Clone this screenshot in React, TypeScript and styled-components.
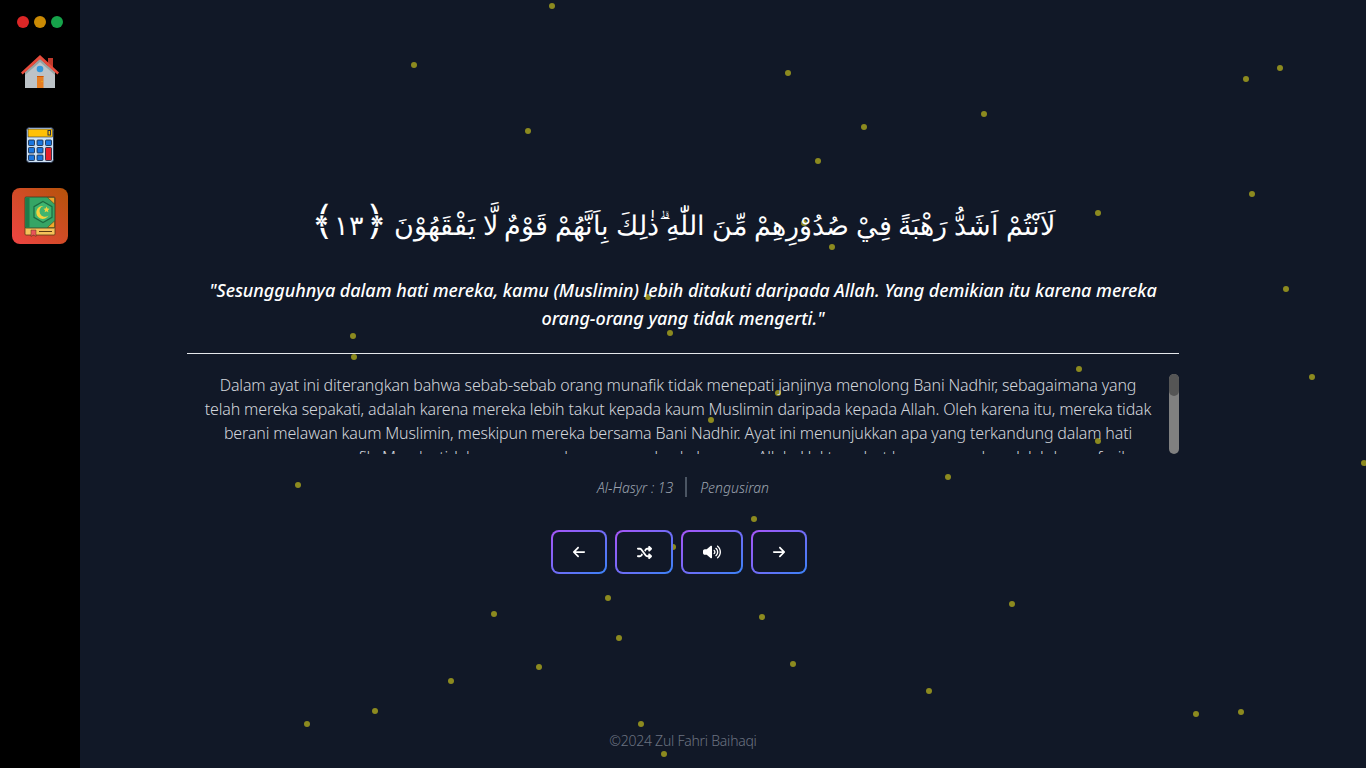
import { createGlobalStyle, styled } from 'styled-components';
import { FaArrowLeft, FaArrowRight, FaShuffle, FaVolumeHigh } from 'react-icons/fa6';

const GlobalStyle = createGlobalStyle`
  html, body {
    margin: 0;
    padding: 0;
    background: #111827;
  }
  * {
    box-sizing: border-box;
  }
`;

const Page = styled.div`
  position: relative;
  height: 100vh;
  display: flex;
  flex-direction: column;
  align-items: center;
  overflow: hidden;
  background: #111827;
  color: #fff;
  font-family: 'Noto Sans', sans-serif;
`;

const Sidebar = styled.aside`
  position: fixed;
  top: 0;
  left: 0;
  bottom: 0;
  z-index: 3;
  width: 80px;
  display: flex;
  flex-direction: column;
  align-items: center;
  gap: 16px;
  padding-top: 16px;
  background: #000;
`;

const Lights = styled.div`
  display: flex;
  gap: 5px;
`;

const Light = styled.span<{ $color: string }>`
  width: 12px;
  height: 12px;
  border-radius: 50%;
  background: ${({ $color }) => $color};
`;

const NavItem = styled.a<{ $active?: boolean }>`
  width: 56px;
  height: 56px;
  display: flex;
  align-items: center;
  justify-content: center;
  border-radius: 8px;
  background: ${({ $active }) =>
    $active ? 'linear-gradient(to top right, #ef4444, #b45309)' : 'transparent'};
`;

const DotLayer = styled.div`
  position: absolute;
  inset: 0;
  z-index: 1;
`;

const Dot = styled.span`
  position: absolute;
  width: 6px;
  height: 6px;
  margin: -3px 0 0 -2px;
  border-radius: 50%;
  background: #8c8a1f;
`;

const Stage = styled.main`
  position: relative;
  z-index: 2;
  flex: 1;
  display: flex;
  flex-direction: column;
  align-items: center;
  width: 992px;
  padding-top: 190px;
`;

const Arabic = styled.p`
  height: 72px;
  margin: 0 0 14px;
  font-family: serif;
  font-size: 27.4px;
  font-weight: 300;
  line-height: 72px;
  text-align: center;
  white-space: nowrap;
`;

const AyahBracket = styled.span`
  font-size: 40px;
  line-height: 0;
`;

const Translation = styled.p`
  margin: 0 0 21px;
  font-size: 18px;
  font-style: italic;
  font-weight: 500;
  letter-spacing: -0.05px;
  line-height: 28px;
  text-align: center;
`;

const Rule = styled.hr`
  width: 100%;
  height: 1px;
  margin: 0 0 20px;
  border: 0;
  background: #e5e7eb;
`;

const TafsirBox = styled.div`
  width: 100%;
  height: 80px;
  display: flex;
`;

const Tafsir = styled.div`
  flex: 1;
  overflow: hidden;
  padding: 0 15px;
  color: #d1d5db;
  font-size: 16px;
  font-weight: 300;
  letter-spacing: -0.15px;
  line-height: 24px;
  text-align: center;
`;

const TafsirText = styled.p`
  margin: -1px 0 0;
`;

const ScrollTrack = styled.div`
  flex: none;
  width: 10px;
  border-radius: 5px;
  background: #808080;
`;

const ScrollThumb = styled.div`
  height: 22px;
  border-radius: 5px;
  background: #555;
`;

const Meta = styled.div`
  display: flex;
  align-items: center;
  height: 20px;
  margin: 23px 0 33px;
  color: #9ca3af;
  font-size: 14px;
  font-style: italic;
  font-weight: 300;
`;

const MetaDivider = styled.span`
  width: 2px;
  height: 20px;
  margin: 0 13px 0 12px;
  background: #4b5563;
`;

const Controls = styled.div`
  display: flex;
`;

const ControlButton = styled.button<{ $width: number }>`
  width: ${({ $width }) => $width}px;
  height: 44px;
  margin-right: 8px;
  display: flex;
  align-items: center;
  justify-content: center;
  padding: 0;
  border: 2px solid transparent;
  border-radius: 8px;
  color: #fff;
  font-size: 14px;
  background:
    linear-gradient(#111827, #111827) padding-box,
    linear-gradient(to bottom right, #a855f7, #3b82f6) border-box;
`;

const Footer = styled.footer`
  position: relative;
  z-index: 2;
  padding-bottom: 15px;
  color: #6b7280;
  font-size: 14px;
  font-weight: 300;
  letter-spacing: -0.25px;
  line-height: 24px;
`;

const dots = [
  [551, 6], [413, 65], [787, 73], [1245, 79], [1279, 68], [527, 131], [863, 127], [983, 114],
  [817, 161], [1251, 194], [1097, 213], [803, 223], [831, 247], [1285, 289], [647, 297],
  [669, 333], [352, 336], [353, 357], [1078, 369], [1311, 377], [777, 393], [710, 420],
  [1097, 441], [1363, 463], [297, 485], [947, 477], [753, 519], [672, 547], [607, 598],
  [1011, 604], [493, 614], [761, 617], [618, 638], [538, 667], [792, 664], [450, 681],
  [928, 691], [374, 711], [306, 724], [640, 724], [1195, 714], [1240, 712], [663, 754],
];

function HomeIcon() {
  return (
    <svg width="40" height="40" viewBox="0 0 40 40">
      <rect x="28" y="6" width="5" height="10" fill="#c0392b" />
      <path d="M5 20 20 7l15 13v16H5z" fill="#bdc3c7" />
      <path d="M5 20 20 7l15 13v3L20 10 5 23z" fill="#95a5a6" />
      <path d="M20 3 39 20.500l-1.600 2L20 7 2.600 22.500 1 20.500z" fill="#e74c3c" />
      <circle cx="20" cy="17" r="3.300" fill="#3498db" />
      <rect x="17" y="24" width="6.500" height="12" fill="#e67e22" />
      <rect x="17" y="24" width="6.500" height="1" fill="#d35400" />
      <rect x="21.500" y="29" width="1" height="1" fill="#f1c40f" />
    </svg>
  );
}

function CalculatorIcon() {
  const keys = [
    [8.500, 18], [17, 18], [25.500, 18],
    [8.500, 25.500], [17, 25.500],
    [8.500, 33], [17, 33],
  ];
  return (
    <svg width="40" height="44" viewBox="0 0 40 44">
      <rect x="6.500" y="5.500" width="27" height="35" rx="3" fill="#cfe3f5" stroke="#22304a" />
      <rect x="8" y="7" width="24.500" height="8" fill="#ffc107" stroke="#22304a" strokeWidth="0.600" />
      <rect x="28" y="8.500" width="2.500" height="4.500" fill="none" stroke="#22304a" />
      {keys.map(([x, y]) => (
        <rect key={`${x}-${y}`} x={x} y={y} width="6" height="5.500" rx="0.800" fill="#1976e0" stroke="#17233a" strokeWidth="0.800" />
      ))}
      <rect x="25.500" y="25.500" width="6" height="13" rx="0.800" fill="#e8202a" stroke="#17233a" strokeWidth="0.800" />
    </svg>
  );
}

function QuranIcon() {
  return (
    <svg width="40" height="44" viewBox="0 0 40 44">
      <rect x="5" y="33" width="30" height="8" rx="1" fill="#f5c15a" stroke="#5c3a14" strokeWidth="0.800" />
      <rect x="19" y="37" width="13" height="1" fill="#5c3a14" />
      <rect x="5" y="3" width="30" height="31" rx="1" fill="#35a565" stroke="#3a3a20" strokeWidth="0.800" />
      <rect x="5.500" y="3.500" width="4" height="30" fill="#1f7a4a" />
      <path d="M23 7.500 32 12.700v10.600L23 28.500 14 23.300V12.700z" fill="#3fb56f" stroke="#1c6b41" strokeWidth="1.200" />
      <path d="M23.500 12a6.500 6.500 0 1 0 5 9.500 5.500 5.500 0 1 1-5-9.500z" fill="#f4d13d" />
      <path d="m26.500 12.500.9 2.100 2.100.2-1.600 1.400.5 2.100-1.900-1.100-1.900 1.100.5-2.100-1.600-1.400 2.100-.2z" fill="#f4d13d" />
      <path d="M27.500 3.500h7V10z" fill="#f0a92c" stroke="#5c3a14" strokeWidth="0.600" />
      <path d="M34.500 27v6.500h-7z" fill="#f0a92c" stroke="#5c3a14" strokeWidth="0.600" />
      <path d="M11 36h5v6.500l-2.500-1.500L11 42.500z" fill="#e8555a" stroke="#5c3a14" strokeWidth="0.500" />
    </svg>
  );
}

export default function App() {
  return (
    <Page>
      <GlobalStyle />
      <Sidebar>
        <Lights>
          <Light $color="#dc2626" />
          <Light $color="#ca8a04" />
          <Light $color="#16a34a" />
        </Lights>
        <NavItem><HomeIcon /></NavItem>
        <NavItem><CalculatorIcon /></NavItem>
        <NavItem $active><QuranIcon /></NavItem>
      </Sidebar>
      <DotLayer>
        {dots.map(([x, y]) => (
          <Dot key={`${x}-${y}`} style={{ left: x, top: y }} />
        ))}
      </DotLayer>
      <Stage>
        <Arabic dir="rtl">
          لَاَنْتُمْ اَشَدُّ رَهْبَةً فِيْ صُدُوْرِهِمْ مِّنَ اللّٰهِ ۗذٰلِكَ بِاَنَّهُمْ قَوْمٌ لَّا يَفْقَهُوْنَ <AyahBracket>﴿</AyahBracket>١٣<AyahBracket>﴾</AyahBracket>
        </Arabic>
        <Translation>
          "Sesungguhnya dalam hati mereka, kamu (Muslimin) lebih ditakuti daripada Allah. Yang demikian itu karena mereka orang-orang yang tidak mengerti."
        </Translation>
        <Rule />
        <TafsirBox>
          <Tafsir>
            <TafsirText>
              Dalam ayat ini diterangkan bahwa sebab-sebab orang munafik tidak menepati janjinya menolong Bani Nadhir, sebagaimana yang telah mereka sepakati, adalah karena mereka lebih takut kepada kaum Muslimin daripada kepada Allah. Oleh karena itu, mereka tidak berani melawan kaum Muslimin, meskipun mereka bersama Bani Nadhir. Ayat ini menunjukkan apa yang terkandung dalam hati orang-orang munafik. Mereka tidak memegang keagungan dan kebesaran Allah. Hal tersebut karena mereka adalah kaum fasik.
            </TafsirText>
          </Tafsir>
          <ScrollTrack>
            <ScrollThumb />
          </ScrollTrack>
        </TafsirBox>
        <Meta>
          <span>Al-Hasyr : 13</span>
          <MetaDivider />
          <span>Pengusiran</span>
        </Meta>
        <Controls>
          <ControlButton $width={56}><FaArrowLeft /></ControlButton>
          <ControlButton $width={58}><FaShuffle size={15} /></ControlButton>
          <ControlButton $width={62}><FaVolumeHigh size={18} /></ControlButton>
          <ControlButton $width={56}><FaArrowRight /></ControlButton>
        </Controls>
      </Stage>
      <Footer>©2024 Zul Fahri Baihaqi</Footer>
    </Page>
  );
}
